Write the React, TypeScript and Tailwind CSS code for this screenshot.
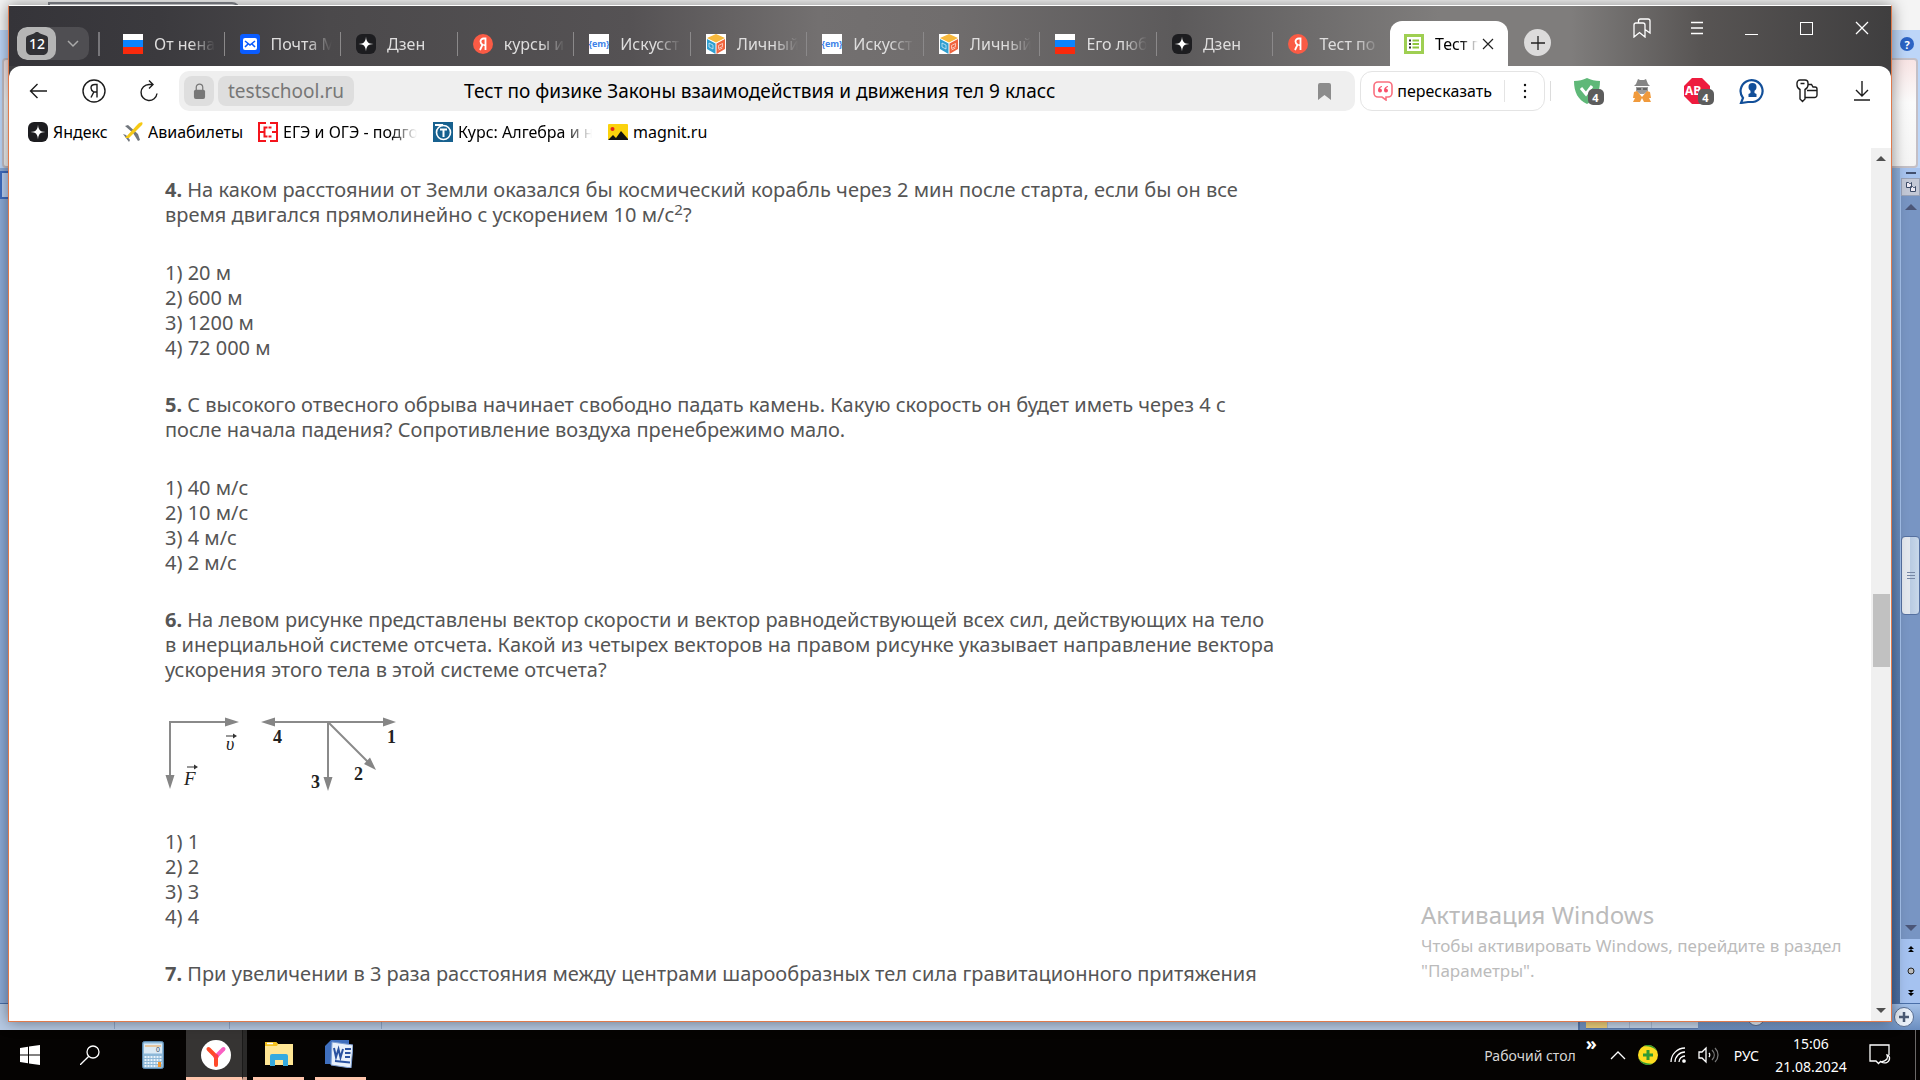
const PAGE_FONT = "font-['Noto_Sans','Open_Sans',sans-serif]";

function FlagIcon() {
  return (
    <svg viewBox="0 0 20 20" className="h-5 w-5 shrink-0">
      <rect width="20" height="7" fill="#fff" />
      <rect y="6" width="20" height="7" fill="#0a84ff" />
      <rect y="13" width="20" height="7" fill="#f92a0c" />
    </svg>
  );
}

function MailIcon() {
  return (
    <svg viewBox="0 0 20 20" className="h-5 w-5 shrink-0">
      <rect width="20" height="20" rx="3" fill="#0a5cff" />
      <rect x="3" y="4" width="14" height="12" rx="2" fill="#fff" />
      <path d="M5 7l5 4 5-4M5 13l3-3M15 13l-3-3" fill="none" stroke="#0a5cff" strokeWidth="1.6" />
    </svg>
  );
}

function ZenIcon() {
  return (
    <svg viewBox="0 0 20 20" className="h-5 w-5 shrink-0">
      <rect width="20" height="20" rx="6" fill="#1d1d20" />
      <path d="M10 2.500c.3 5.300 2 7.200 7.500 7.500-5.500.3-7.200 2.200-7.500 7.500-.3-5.300-2-7.200-7.500-7.500 5.500-.3 7.200-2.200 7.500-7.500z" fill="#fff" />
    </svg>
  );
}

function YaIcon() {
  return (
    <svg viewBox="0 0 20 20" className="h-5 w-5 shrink-0">
      <circle cx="10" cy="10" r="10" fill="#fa5b45" />
      <path d="M12.500 16V4.500h-1.700c-2 0-3.300 1.200-3.300 3 0 1.500.8 2.400 2 3.200L7 16M12.500 11.200h-2" fill="none" stroke="#fff" strokeWidth="1.800" />
    </svg>
  );
}

function EmIcon() {
  return (
    <svg viewBox="0 0 20 20" className="h-5 w-5 shrink-0">
      <rect width="20" height="20" fill="#fff" />
      <text x="10" y="13" textAnchor="middle" fontSize="9" fontWeight="700" fontFamily="Open Sans, sans-serif" fill="#3f83e8">
        {"{em}"}
      </text>
    </svg>
  );
}

function CubeIcon() {
  return (
    <svg viewBox="0 0 20 20" className="h-5 w-5 shrink-0">
      <rect width="20" height="20" fill="#fff" />
      <path d="M10 0l9 4-9 4.500L1 4z" fill="#f8b93c" />
      <path d="M1 5l8.500 4.500V20L1 15z" fill="#2f9fd0" />
      <path d="M19 5l-8.500 4.500V20L19 15z" fill="#f0653f" />
      <path d="M3 9l4 2v4l-4-2zM12.500 11.500l4-2v3l-4 2zM12.500 16l4-2" fill="none" stroke="#fff" strokeOpacity=".6" />
    </svg>
  );
}

function TestIcon() {
  return (
    <svg viewBox="0 0 20 20" className="h-5 w-5 shrink-0">
      <rect width="20" height="20" fill="#9fcf52" />
      <rect x="3" y="3" width="14" height="14" fill="#fff" />
      <path d="M5 6.500h2M5 10h2M5 13.500h2" stroke="#333" strokeWidth="2" />
      <path d="M8.500 6.500H15M8.500 10H15M8.500 13.500H15" stroke="#8fc63d" strokeWidth="2" />
    </svg>
  );
}

const tabs = [
  { title: "От нена", icon: <FlagIcon /> },
  { title: "Почта M", icon: <MailIcon /> },
  { title: "Дзен", icon: <ZenIcon /> },
  { title: "курсы и", icon: <YaIcon /> },
  { title: "Искусст", icon: <EmIcon /> },
  { title: "Личный", icon: <CubeIcon /> },
  { title: "Искусст", icon: <EmIcon /> },
  { title: "Личный", icon: <CubeIcon /> },
  { title: "Его люб", icon: <FlagIcon /> },
  { title: "Дзен", icon: <ZenIcon /> },
  { title: "Тест по", icon: <YaIcon /> },
];

const bookmarks = [
  { title: "Яндекс", width: "w-[95px]", fade: false, icon: <ZenIcon /> },
  {
    title: "Авиабилеты",
    width: "w-[135px]",
    fade: false,
    icon: (
      <svg viewBox="0 0 20 20" className="h-5 w-5 shrink-0">
        <path d="M2 4l3-1 10 9 2 6-2 1-5-8zM0 12l3 1 4 5-1 2-3-4z" fill="#72777d" />
        <path d="M2 16L15 2c2-2 6-3 4 1L6 16z" fill="#f6c915" />
      </svg>
    ),
  },
  {
    title: "ЕГЭ и ОГЭ - подго",
    width: "w-[175px]",
    fade: true,
    icon: (
      <svg viewBox="0 0 20 20" className="h-5 w-5 shrink-0">
        <rect width="20" height="20" fill="#fff" />
        <path d="M8 1H1v18h7M1 10h5M12 1h7v18h-7M14 10h5M9.500 5.500h-3v9h3M10.500 5.500h3M10.500 14.500h3" fill="none" stroke="#f4141c" strokeWidth="2" />
      </svg>
    ),
  },
  {
    title: "Курс: Алгебра и н",
    width: "w-[175px]",
    fade: true,
    icon: (
      <svg viewBox="0 0 20 20" className="h-5 w-5 shrink-0">
        <rect width="20" height="20" fill="#17618f" />
        <circle cx="10.500" cy="10.500" r="7" fill="none" stroke="#fff" strokeWidth="1.600" />
        <path d="M2 3h8M7 7.500h7M10.500 7.500V15" fill="none" stroke="#fff" strokeWidth="2" />
      </svg>
    ),
  },
  {
    title: "magnit.ru",
    width: "w-[110px]",
    fade: false,
    icon: (
      <svg viewBox="0 0 20 20" className="h-5 w-5 shrink-0">
        <rect y="2" width="20" height="16" rx="1" fill="#fbd20d" />
        <circle cx="4.500" cy="7" r="2" fill="#e3261b" />
        <path d="M0 18l5-5 3 3 5-7 7 8v1z" fill="#111" />
      </svg>
    ),
  },
];

const FADE = "[mask-image:linear-gradient(to_right,black_60%,transparent)]";

function TabStrip() {
  const stroke = { fill: "none", stroke: "#fff", strokeWidth: 1.3 };
  return (
    <div className="flex h-[60px] justify-between bg-[linear-gradient(90deg,#353439_0%,#3b3a3e_8%,#4b494b_17%,#555254_33%,#737070_43%,#706d6d_50%,#5c5a5b_62%,#7f7d7c_76%,#7f7d7c_83%,#575453_90%,#3f3e3f_100%)]">
      <div className="flex min-w-0">
        <div className="mt-[21px] ml-2 flex h-[33px] w-[72px] shrink-0 overflow-hidden rounded-[10px] bg-[#4f4e52]">
          <button className="flex w-[39px] items-center justify-center rounded-[10px] bg-[#b5b5b5]">
            <svg viewBox="0 0 22 23" className="h-[23px] w-[22px]">
              <path d="M11 0c1 0 1.500.4 3 1.500l5.500 2C21.500 4.300 22 5 22 7v10c0 4-2 6-6 6H6c-4 0-6-2-6-6V7c0-2 .5-2.700 2.500-3.500L8 1.500C9.500.4 10 0 11 0z" fill="#303034" />
              <text x="11" y="17" textAnchor="middle" fontSize="14" fontWeight="500" fill="#fff">
                12
              </text>
            </svg>
          </button>
          <button aria-label="Список вкладок" className="flex flex-1 items-center justify-center">
            <svg viewBox="0 0 12 8" className="w-3" fill="none" stroke="#aaa" strokeWidth="1.500">
              <path d="M1 1l5 5 5-5" />
            </svg>
          </button>
        </div>
        <span className="mt-[26px] ml-[9px] h-6 w-0.5 shrink-0 bg-[#77767a]" />
        <div className="ml-2 flex min-w-0">
          <div className="flex w-[1282px] min-w-0">
            {tabs.map((tab, i) => (
              <a key={i} href="#" className="mt-[17px] flex h-[41px] min-w-0 flex-1 items-center pl-[15px]">
                {tab.icon}
                <span className={`ml-[11px] w-[61px] overflow-hidden text-[16px] whitespace-nowrap text-[#dedddd] ${FADE}`}>
                  {tab.title}
                </span>
                <span className={`ml-auto h-6 w-px ${i < 10 ? "bg-[#8b898a]" : ""}`} />
              </a>
            ))}
          </div>
          <div className="mt-[15px] flex h-[45px] w-[118px] shrink-0 items-center rounded-t-xl bg-white pl-[14px]">
            <TestIcon />
            <span className={`ml-[11px] w-[43px] overflow-hidden text-[16px] whitespace-nowrap text-black ${FADE}`}>Тест п</span>
            <button aria-label="Закрыть вкладку" className="ml-1">
              <svg viewBox="0 0 12 12" className="w-3" fill="none" stroke="#222" strokeWidth="1.200">
                <path d="M1 1l10 10M11 1L1 11" />
              </svg>
            </button>
          </div>
          <button aria-label="Новая вкладка" className="mt-[23px] ml-4 flex h-[27px] w-[27px] shrink-0 items-center justify-center rounded-full bg-[#dcdbdb]">
            <svg viewBox="0 0 14 14" className="w-3.5" fill="none" stroke="#222" strokeWidth="1.300">
              <path d="M7 0v14M0 7h14" />
            </svg>
          </button>
        </div>
      </div>
      <div className="mr-0.5 flex h-11 shrink-0">
        <button aria-label="Коллекции" className="flex w-[55px] items-center justify-center">
          <svg viewBox="0 0 18 20" className="h-5 w-[18px]" {...stroke}>
            <path d="M1 7a2 2 0 012-2h7a2 2 0 012 2v12l-5.500-4.500L1 19zM5.500 5V3a2 2 0 012-2H15a2 2 0 012 2v12l-5-3.500" />
          </svg>
        </button>
        <button aria-label="Меню" className="flex w-[55px] items-center justify-center">
          <svg viewBox="0 0 14 14" className="w-3.5" {...stroke}>
            <path d="M1 1.500h12M1 7h12M1 12.500h12" />
          </svg>
        </button>
        <button aria-label="Свернуть" className="flex w-[55px] items-center justify-center pt-3">
          <span className="h-px w-[13px] bg-white" />
        </button>
        <button aria-label="Развернуть" className="flex w-[55px] items-center justify-center">
          <span className="h-[13px] w-[13px] border border-white" />
        </button>
        <button aria-label="Закрыть" className="flex w-[55px] items-center justify-center">
          <svg viewBox="0 0 14 14" className="w-3.5" {...stroke}>
            <path d="M1 1l12 12M13 1L1 13" />
          </svg>
        </button>
      </div>
    </div>
  );
}

function Badge() {
  return (
    <span className="absolute -right-1 -bottom-px flex h-4 w-4 items-center justify-center rounded-[5px] bg-[#5c5c5c] text-[11px] leading-none font-bold text-white">
      4
    </span>
  );
}

function Toolbar() {
  const line = { fill: "none", stroke: "#1c1c1c", strokeWidth: 1.4 };
  return (
    <div className="flex h-[50px] items-center">
      <button aria-label="Назад" className="ml-1 flex w-[50px] justify-center">
        <svg viewBox="0 0 18 16" className="h-4 w-[18px]" {...line}>
          <path d="M18 8H1.500M8.500 1L1.500 8l7 7" />
        </svg>
      </button>
      <button aria-label="Яндекс" className="flex w-[61px] justify-center">
        <svg viewBox="0 0 24 24" className="w-6" {...line}>
          <circle cx="12" cy="12" r="11" />
          <path d="M15 18.500v-13h-2c-2.500 0-4 1.500-4 3.500s1 3 2.800 4L9 18.500M15 13h-3" />
        </svg>
      </button>
      <button aria-label="Обновить" className="flex w-[50px] justify-center">
        <svg viewBox="0 0 20 22" className="h-[22px] w-5" {...line}>
          <path d="M18 13.500a8 8 0 11-8-9h4M10 .5l4 4-4 4" />
        </svg>
      </button>
      <div className="ml-[5px] flex h-10 flex-1 items-center rounded-[10px] bg-[#efefef] pr-6 pl-[5px]">
        <button aria-label="Защита" className="flex h-[30px] w-[30px] items-center justify-center rounded-lg bg-[#dedede]">
          <svg viewBox="0 0 14 18" className="h-[17px] w-[13px]">
            <path d="M3.500 8V4.500a3.500 3.500 0 017 0V8" fill="none" stroke="#777" strokeWidth="1.300" />
            <rect x="1" y="7" width="12" height="10" rx="2" fill="#777" />
          </svg>
        </button>
        <a href="#" className="ml-1 flex h-[30px] items-center rounded-lg bg-[#dedede] px-2.5 text-[19px] text-[#777]">
          testschool.ru
        </a>
        <span className="ml-[110px] flex-1 text-[19px] whitespace-nowrap text-black">
          Тест по физике Законы взаимодействия и движения тел 9 класс
        </span>
        <button aria-label="В закладки">
          <svg viewBox="0 0 13 17" className="h-[17px] w-[13px]" fill="#8c8c8c">
            <path d="M0 2a2 2 0 012-2h9a2 2 0 012 2v15l-6.500-5L0 17z" />
          </svg>
        </button>
      </div>
      <div className="ml-[5px] flex h-10 items-center rounded-[12px] border border-[#e4e4e4]">
        <button className="flex items-center gap-1 pr-3 pl-3 text-[16px]">
          <svg viewBox="0 0 20 20" className="w-5">
            <path d="M5 1h10a4 4 0 014 4v7a4 4 0 01-4 4h-2v3l-4-3H5a4 4 0 01-4-4V5a4 4 0 014-4z" fill="none" stroke="#f9707f" strokeWidth="1.600" />
            <path d="M9 5C6.500 5.300 5 7 5 9.500a2 2 0 104 0 1.800 1.800 0 00-1.800-1.800C7.300 6.700 8 6.200 9 6zM15 5c-2.500.3-4 2-4 4.500a2 2 0 104 0 1.800 1.800 0 00-1.800-1.800c.1-1 .8-1.500 1.800-1.700z" fill="#f9506a" />
          </svg>
          пересказать
        </button>
        <span className="h-[22px] w-px bg-[#e4e4e4]" />
        <button aria-label="Ещё" className="flex w-[39px] justify-center">
          <svg viewBox="0 0 4 16" className="h-4 w-1" fill="#111">
            <circle cx="2" cy="2" r="1.200" />
            <circle cx="2" cy="8" r="1.200" />
            <circle cx="2" cy="14" r="1.200" />
          </svg>
        </button>
      </div>
      <span className="ml-[5px] h-5 w-px bg-[#dcdcdc]" />
      <div className="mr-0.5 ml-2 flex items-center">
        <button aria-label="Protect" className="flex w-[55px] justify-center">
          <span className="relative">
            <svg viewBox="0 0 26 26" className="w-[26px]">
              <path d="M0 3c5 0 9-1 13-3 4 2 8 3 13 3 0 11-4 19-13 23C4 22 0 14 0 3z" fill="#5fb878" />
              <path d="M7 10l5 6 6-8" fill="none" stroke="#fff" strokeWidth="3" />
            </svg>
            <Badge />
          </span>
        </button>
        <button aria-label="Savefrom" className="flex w-[55px] justify-center">
          <svg viewBox="0 0 20 24" className="h-6 w-5">
            <path d="M4 5l2-5 2 1h4l2-1 2 5 2 2H2z" fill="#858585" />
            <path d="M4 8h12v4l-4 3H8l-4-3z" fill="#9b9b9b" />
            <path d="M5 9h4v2H5zM11 9h4v2h-4z" fill="#666" />
            <path d="M2 13l3-1 5 6 5-6 3 1 1 6h-2l2 4h-7l-2-4-2 4H1l2-4H1z" fill="#f09a3c" />
          </svg>
        </button>
        <button aria-label="Adblock" className="flex w-[55px] justify-center">
          <span className="relative">
            <svg viewBox="0 0 26 26" className="w-[26px]">
              <path d="M8 0h10l8 8v10l-8 8H8l-8-8V8z" fill="#ee1c3e" />
              <text x="1" y="17" fontSize="12" fontWeight="700" fontFamily="Open Sans, sans-serif" fill="#fff">AB</text>
            </svg>
            <Badge />
          </span>
        </button>
        <button aria-label="Пароли" className="flex w-[55px] justify-center">
          <svg viewBox="0 0 26 26" className="w-[26px]">
            <path d="M2 25l2-5a11 11 0 1110 4H9z" fill="#fff" stroke="#124f99" strokeWidth="2.200" />
            <circle cx="13.500" cy="9" r="4" fill="#124f99" />
            <path d="M11.500 11h4v4l2 1v3h-8v-3l2-1z" fill="#124f99" />
          </svg>
        </button>
        <button aria-label="Ключи" className="flex w-[55px] justify-center">
          <svg viewBox="0 0 22 24" className="h-6 w-[22px]" {...line}>
            <path d="M4 10.500V20l2.500 2.500L9 20v-9.500C11 9.500 12 8 12 6V4a3 3 0 00-3-3H4a3 3 0 00-3 3v2c0 2 1 3.500 3 4.500zM4.500 4.500h4" />
            <path d="M12 5.500h3.500L17 8h2a2 2 0 012 2v6a2.500 2.500 0 01-2.500 2.500H9M11 11.500h10" />
          </svg>
        </button>
        <button aria-label="Загрузки" className="flex w-[55px] justify-center">
          <svg viewBox="0 0 16 20" className="h-5 w-4" {...line}>
            <path d="M8 0v15M2 9l6 6 6-6M0 19h16" />
          </svg>
        </button>
      </div>
    </div>
  );
}

function BookmarkBar() {
  return (
    <nav className="flex h-8 items-center pl-[19px]">
      {bookmarks.map((b) => (
        <a key={b.title} href="#" className={`flex items-center gap-[5px] ${b.width}`}>
          {b.icon}
          <span className={`overflow-hidden text-[16px] whitespace-nowrap text-black ${b.fade ? "w-[134px] [mask-image:linear-gradient(to_right,black_80%,transparent)]" : ""}`}>
            {b.title}
          </span>
        </a>
      ))}
    </nav>
  );
}

function VectorFigure() {
  return (
    <svg viewBox="0 0 236 80" className="h-20 w-[236px]" role="img">
      <g stroke="#8a8a8a" strokeWidth="2" fill="none">
        <path d="M5 70V8h56M106 8h112M163 8v62M163 8l40 40" />
      </g>
      <g fill="#858585">
        <path d="M60 3.500L74 8l-14 4.500zM.5 61L5 75l4.500-14zM110 3.500L96 8l14 4.500z" />
        <path d="M218 3.500L231 8l-13 4.500zM158.500 63l4.500 14 4.500-14zM199 50l6-6.500L211 56z" />
      </g>
      <g fontFamily="Liberation Serif, serif" fill="#222">
        <text x="61" y="36" fontSize="18" fontStyle="italic">υ</text>
        <text x="19" y="71" fontSize="19" fontStyle="italic">F</text>
        <g fontSize="18" fontWeight="700">
          <text x="108" y="29">4</text>
          <text x="222" y="29">1</text>
          <text x="146" y="74">3</text>
          <text x="189" y="66">2</text>
        </g>
      </g>
      <path d="M61 22h8M22 53h8" stroke="#333" strokeWidth="1.200" />
      <path d="M68 19.500l4 2.500-4 2.500zM29 50.500l4 2.500-4 2.500z" fill="#333" />
    </svg>
  );
}

function Answers({ items }: { items: string[] }) {
  return (
    <p className="mb-8">
      {items.map((item, i) => (
        <span key={item} className="block">
          {i + 1}) {item}
        </span>
      ))}
    </p>
  );
}

function TestPage() {
  return (
    <main className="min-w-0 flex-1 overflow-hidden pt-[29px] pl-[156px] text-[20px] leading-[25px] text-[#555]">
      <p className="mb-[33px]">
        <b>4.</b> На каком расстоянии от Земли оказался бы космический корабль через 2 мин после старта, если бы он все
        <br />
        время двигался прямолинейно с ускорением 10 м/с<sup className="text-[15px]">2</sup>?
      </p>
      <Answers items={["20 м", "600 м", "1200 м", "72 000 м"]} />
      <p className="mb-[33px]">
        <b>5.</b> С высокого отвесного обрыва начинает свободно падать камень. Какую скорость он будет иметь через 4 с
        <br />
        после начала падения? Сопротивление воздуха пренебрежимо мало.
      </p>
      <Answers items={["40 м/с", "10 м/с", "4 м/с", "2 м/с"]} />
      <p className="mb-8">
        <b>6.</b> На левом рисунке представлены вектор скорости и вектор равнодействующей всех сил, действующих на тело
        <br />
        в инерциальной системе отсчета. Какой из четырех векторов на правом рисунке указывает направление вектора
        <br />
        ускорения этого тела в этой системе отсчета?
      </p>
      <div className="mb-[35px]">
        <VectorFigure />
      </div>
      <Answers items={["1", "2", "3", "4"]} />
      <p>
        <b>7.</b> При увеличении в 3 раза расстояния между центрами шарообразных тел сила гравитационного притяжения
      </p>
    </main>
  );
}

function BrowserWindow() {
  return (
    <section className="absolute top-[5px] right-[28px] bottom-[8px] left-2 flex flex-col border border-[#e07a4c] border-t-white bg-[#403f42] shadow-[0_0_14px_rgba(0,0,0,0.45)]">
      <TabStrip />
      <div className="flex min-h-0 flex-1 flex-col rounded-t-xl bg-white">
        <Toolbar />
        <BookmarkBar />
        <div className="flex min-h-0 flex-1">
          <TestPage />
          <div className="flex w-5 flex-col items-center bg-[#f0f0f0] py-2">
            <svg viewBox="0 0 10 5" className="h-[5px] w-2.5" fill="#505050">
              <path d="M5 0l5 5H0z" />
            </svg>
            <div className="mt-[433px] h-[73px] w-[17px] bg-[#c1c1c1]" />
            <svg viewBox="0 0 10 5" className="mt-auto h-[5px] w-2.5" fill="#505050">
              <path d="M0 0h10L5 5z" />
            </svg>
          </div>
        </div>
      </div>
    </section>
  );
}

// Word window that shows round the browser's edges
function WordWindow() {
  return (
    <section className="flex h-full flex-col">
      <div className="h-[30px] bg-[#f4f4f4] pt-0.5 pl-12">
        <div className="h-6 w-48 rounded-tr-lg border-2 border-[#85888f] bg-[#e4e4e6]" />
      </div>
      <div className="flex h-7 items-center justify-end bg-[#bdd6f8] pr-1.5">
        <button aria-label="Справка" className="flex h-[14px] w-[14px] items-center justify-center rounded-full bg-[#2b63c4] text-[11px] leading-none font-bold text-white">
          ?
        </button>
      </div>
      <div className="bg-[#bdd6f8] px-0.5">
        <div className="h-[110px] rounded border-2 border-[#c3bfc6] bg-[linear-gradient(180deg,#f8e4e4,#fbfbfb_40%,#f4f4f4)]" />
      </div>
      <div className="flex min-h-0 flex-1 justify-between bg-[linear-gradient(180deg,#8fb0dc_0%,#5c80b4_60%,#4c6fa3_100%)]">
        <div className="w-6 bg-[#8dabd8] pt-[3px]">
          <div className="h-7 border-2 border-[#3f6cc0] bg-[#b9d0f3]" />
        </div>
        <div className="flex w-5 flex-col border-l border-[#a7c3ee] bg-[#7895c3]">
          <div className="flex h-[10px] items-center justify-center bg-[#a7c3ee]">
            <span className="h-0.5 w-2.5 bg-[#42506e]" />
          </div>
          <div className="flex h-[18px] items-center justify-center border border-[#9aa3b8] bg-[#c3c8d6]">
            <svg viewBox="0 0 12 12" className="w-3" fill="#f0ecf6" stroke="#3b4a66">
              <path d="M1.500 1.500h2l1 1h1l1-1v5h-5zM5.500 5.500h2l1 1h1l1-1v5h-5z" />
            </svg>
          </div>
          <svg viewBox="0 0 12 6" className="mt-2 h-1.5 w-3 self-center" fill="#4b5678">
            <path d="M6 0l6 6H0z" />
          </svg>
          <div className="mt-[326px] flex h-[79px] flex-col items-center justify-center gap-0.5 rounded-sm border border-[#5570a0] bg-[linear-gradient(90deg,#e4e8ee_45%,#b9cbe2_50%,#c9d8ea)]">
            <span className="h-px w-2 bg-[#7787a5]" />
            <span className="h-px w-2 bg-[#7787a5]" />
            <span className="h-px w-2 bg-[#7787a5]" />
          </div>
          <svg viewBox="0 0 12 6" className="mt-auto mb-2 h-1.5 w-3 self-center" fill="#4b5678">
            <path d="M0 0h12L6 6z" />
          </svg>
          <div className="flex h-16 flex-col items-center justify-around bg-[#a5c2f0]">
            <svg viewBox="0 0 6 6" className="w-1.5">
              <path d="M3 0l3 3H0zM3 3l3 3H0z" />
            </svg>
            <svg viewBox="0 0 8 8" className="w-2">
              <circle cx="4" cy="4" r="3" fill="#bbb" stroke="#222" />
            </svg>
            <svg viewBox="0 0 6 6" className="w-1.5">
              <path d="M0 0h6L3 3zM0 3h6L3 6z" />
            </svg>
          </div>
        </div>
      </div>
      <div className="flex h-[27px] items-center border-t border-[#4a6fa8] bg-[#b7cae4]">
        <span className="ml-[114px] h-6 w-px bg-[#8fa5c6]" />
        <span className="ml-[114px] h-6 w-px bg-[#8fa5c6]" />
        <span className="ml-[151px] h-6 w-px bg-[#8fa5c6]" />
        <div className="ml-auto flex h-full w-[342px] items-center justify-between border-l-2 border-[#5577ab] bg-[linear-gradient(180deg,#a3c0e8,#6a8dbf)] pr-1.5 pl-1.5">
          <div className="flex h-6 w-28 divide-x divide-[#a9bad3] border-b border-[#5d7cae] bg-[#c5d5ea]">
            <span className="w-[22px] bg-[#f1d27b]" />
            <span className="w-[22px]" />
            <span className="w-[22px]" />
            <span className="w-[22px]" />
          </div>
          <span className="h-[18px] w-[18px] rounded-full border border-[#5a6f93] bg-[#e9f0f9]" />
          <button aria-label="Увеличить" className="ml-20 rounded-full border border-[#5a6f93] bg-[#e9f0f9]">
            <svg viewBox="0 0 18 18" className="w-[18px]" fill="none" stroke="#4a5a75" strokeWidth="2.500">
              <path d="M9 4v10M4 9h10" />
            </svg>
          </button>
        </div>
      </div>
    </section>
  );
}

function Taskbar() {
  const line = { fill: "none", stroke: "#fff", strokeWidth: 1.3 };
  return (
    <footer className="flex h-[50px] shrink-0 items-stretch bg-[#050302] text-white">
      <button aria-label="Пуск" className="flex w-[60px] items-center justify-center">
        <svg viewBox="0 0 20 20" className="w-5" fill="#fff">
          <path d="M0 3l8-1.200V9.500H0zM9 1.600L20 0v9.500H9zM0 10.500h8v7.700L0 17zM9 10.500h11V20L9 18.400z" />
        </svg>
      </button>
      <button aria-label="Поиск" className="flex w-[60px] items-center justify-center">
        <svg viewBox="0 0 20 20" className="w-5" {...line}>
          <circle cx="13" cy="7" r="6" />
          <path d="M8.800 11.300L0 20" />
        </svg>
      </button>
      <button aria-label="Калькулятор" className="flex w-[66px] items-center justify-center">
        <svg viewBox="0 0 22 28" className="h-7 w-[22px]">
          <rect x=".5" y=".5" width="21" height="27" rx="2" fill="#8db8d8" stroke="#5b88ae" />
          <rect x="2" y="2.500" width="18" height="10" fill="#dbeaf5" />
          <path d="M3 5h16" stroke="#f0a14a" />
          <text x="14" y="11" fontSize="7" fontFamily="Liberation Sans" fill="#345">0</text>
          <path d="M2.500 16h17M2.500 19h17M2.500 22h17M2.500 25h13" stroke="#e8f3fb" strokeWidth="2" strokeDasharray="2 1" />
          <rect x="16" y="21" width="3" height="5" fill="#f0952e" />
        </svg>
      </button>
      <button aria-label="Яндекс Браузер" className="flex w-14 items-center justify-center border-b-3 border-[#ffc5ac] bg-[#363433] pt-0.5">
        <svg viewBox="0 0 30 30" className="ml-1 w-[30px]">
          <circle cx="15" cy="15" r="15" fill="#fff" />
          <path d="M15 25v-8.500L7.500 9" fill="none" stroke="#ff4a2a" strokeWidth="4" strokeLinecap="round" strokeLinejoin="round" />
          <path d="M15 16.500L22.500 9" stroke="#f95fc2" strokeWidth="4" strokeLinecap="round" />
          <circle cx="15" cy="16.500" r="2.500" fill="#ff4040" />
        </svg>
      </button>
      <span className="w-[5px] border-b-3 border-l border-b-[#cda08e] border-l-[#1b1a19] bg-[#2b2a29]" />
      <button aria-label="Проводник" className="mr-[11px] ml-1.5 flex w-[51px] items-center justify-center border-b-3 border-[#ffc5ac]">
        <svg viewBox="0 0 28 24" className="h-6 w-7">
          <path d="M0 0h11l2 2h15v21H0z" fill="#ffe694" />
          <path d="M0 0h11l2 2-1 2H0z" fill="#f5c220" />
          <path d="M2 1.500h6" stroke="#fff" strokeWidth="1.500" />
          <path d="M5 24V14a2 2 0 012-2h14a2 2 0 012 2v10h-5v-6h-8v6z" fill="#35aadf" />
        </svg>
      </button>
      <button aria-label="Word" className="flex w-[51px] items-center justify-center border-b-3 border-[#ffc5ac] pr-1">
        <svg viewBox="0 0 28 28" className="w-7">
          <path d="M6 0h18v24H0V6z" fill="#3f6fbe" />
          <path d="M7 2l21 3-2 23-20-3z" fill="#e9f1fb" stroke="#7d9ed2" />
          <path d="M9 8l2 9 2.500-8 2 8.500L18 9" fill="none" stroke="#2a52a0" strokeWidth="2" />
          <path d="M20 9h6M20 13h5.500M20 17h5M10 21l15 1.500" stroke="#2a52a0" strokeWidth="1.800" />
        </svg>
      </button>
      <div className="ml-auto flex items-center text-[14px]">
        <span className="text-[#d8d6d5]">Рабочий стол</span>
        <span className="mb-6 ml-2.5 w-3 text-lg leading-none font-bold">»</span>
        <svg viewBox="0 0 16 9" className="ml-3 w-4" {...line}>
          <path d="M1 8l7-7 7 7" />
        </svg>
        <svg viewBox="0 0 20 20" className="ml-3 w-5">
          <circle cx="10" cy="10" r="10" fill="#fddc1f" />
          <path d="M5 1.400A10 10 0 0119.500 7C17 3 12 1 5 1.400zM.5 13A10 10 0 0015 18.600C8 19 3 17 .5 13z" fill="#2f9a35" />
          <path d="M8.500 5h3v3.500H15v3h-3.500V15h-3v-3.500H5v-3h3.500z" fill="#2f9a35" />
        </svg>
        <svg viewBox="0 0 16 16" className="ml-3 w-4" {...line}>
          <path d="M1 15A14 14 0 0115 1M5 15A10 10 0 0115 5M9 15a6 6 0 016-6" />
          <circle cx="14" cy="14" r="1.200" fill="#fff" />
        </svg>
        <svg viewBox="0 0 22 18" className="ml-3 h-[18px] w-[22px]" {...line}>
          <path d="M1 6h3l4-4v14l-4-4H1zM11 7c1 1 1 3 0 4" />
          <path d="M14 4c3 3 3 7 0 10M17 2c4 4 4 10 0 14" stroke="#777" />
        </svg>
        <span className="ml-3.5">РУС</span>
        <time className="ml-4 w-[72px] text-center leading-[23px]">
          15:06
          <br />
          21.08.2024
        </time>
        <button aria-label="Уведомления" className="ml-[22px]">
          <svg viewBox="0 0 22 22" className="w-[22px]" {...line}>
            <path d="M12 17l-2.500 2.500L7 17H1V1h19v10M18 11c1.500 3 0 6-6 7 5 2.500 9-.5 8.500-4.500-.3-1.500-1.300-2.300-2.500-2.500z" />
          </svg>
        </button>
        <span className="mr-1 ml-6 h-[50px] w-px bg-[#6b6867]" />
      </div>
    </footer>
  );
}

export default function App() {
  return (
    <div className={`flex h-screen flex-col overflow-hidden ${PAGE_FONT}`}>
      <div className="relative min-h-0 flex-1">
        <WordWindow />
        <BrowserWindow />
        <aside className="absolute right-[76px] bottom-[47px] w-[423px] text-[#bbb]">
          <p className="text-[24px] leading-[36px]">Активация Windows</p>
          <p className="text-[17px] leading-[25px]">Чтобы активировать Windows, перейдите в раздел "Параметры".</p>
        </aside>
      </div>
      <Taskbar />
    </div>
  );
}
